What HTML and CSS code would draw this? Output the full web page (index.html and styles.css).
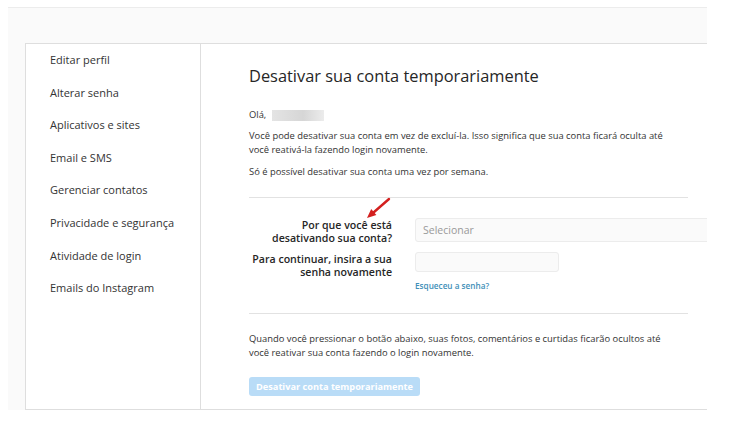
FILE: index.html
```html
<!DOCTYPE html>
<html lang="pt-BR">
<head>
  <meta charset="UTF-8">
  <meta name="viewport" content="width=device-width, initial-scale=1.0">
  <title>Desativar sua conta temporariamente</title>
  <link rel="stylesheet" href="styles.css">
</head>
<body>
  <div class="page">
    <div class="card">
      <ul class="sidebar">
        <li>Editar perfil</li>
        <li>Alterar senha</li>
        <li>Aplicativos e sites</li>
        <li>Email e SMS</li>
        <li>Gerenciar contatos</li>
        <li>Privacidade e segurança</li>
        <li>Atividade de login</li>
        <li>Emails do Instagram</li>
      </ul>

      <div class="main">
        <h1>Desativar sua conta temporariamente</h1>
        <p class="hello">Olá, <span class="blur"></span></p>
        <p>Você pode desativar sua conta em vez de excluí-la. Isso significa que sua conta ficará oculta até você reativá-la fazendo login novamente.</p>
        <p>Só é possível desativar sua conta uma vez por semana.</p>

        <hr>

        <form class="form">
          <div class="row">
            <label for="reason">Por que você está desativando sua conta?</label>
            <div class="field">
              <select id="reason" class="select">
                <option>Selecionar</option>
              </select>
            </div>
          </div>
          <div class="row">
            <label for="password">Para continuar, insira a sua senha novamente</label>
            <div class="field">
              <input type="password" id="password" class="input">
              <a href="#" class="forgot">Esqueceu a senha?</a>
            </div>
          </div>

          <!-- seta vermelha de destaque -->
          <svg class="arrow" width="26" height="24" viewBox="0 0 26 24">
            <line x1="24" y1="2" x2="8.5" y2="15.5" stroke="#d3201f" stroke-width="2.4" stroke-linecap="round"/>
            <polygon points="2,21 6.2,12.1 11.4,18.1" fill="#d3201f"/>
          </svg>
        </form>

        <hr class="bottom">

        <p class="note">Quando você pressionar o botão abaixo, suas fotos, comentários e curtidas ficarão ocultos até você reativar sua conta fazendo o login novamente.</p>

        <button type="button" class="btn" disabled>Desativar conta temporariamente</button>
      </div>
    </div>
  </div>
</body>
</html>
```

FILE: styles.css
```css
body {
  margin: 0;
  background: #fff;
  font-family: "Open Sans", "Noto Sans", Arial, sans-serif;
  color: #262626;
}

.page {
  margin: 7px 0 0 8px;
  width: 699px;
  height: 403px;
  background: #fafafa;
  border-top: 1px solid #ececec;
  box-sizing: border-box;
  padding: 35px 0 0 17px;
}

.card {
  display: flex;
  height: 100%;
  background: #fff;
  border: 1px solid #dedede;
  border-right: none;
  box-sizing: border-box;
}

/* menu da esquerda */
.sidebar {
  list-style: none;
  margin: 0;
  padding: 8px 0 0 0;
  width: 174px;
  border-right: 1px solid #dedede;
  flex-shrink: 0;
}

.sidebar li {
  font-size: 11px;
  line-height: 16px;
  padding: 0 0 16.6px 24px;
  color: #333;
}

.main {
  flex: 1;
  padding: 20px 0 0 48px;
  overflow: hidden;
}

h1 {
  margin: 0 0 20px;
  font-size: 16.4px;
  font-weight: 400;
  color: #262626;
  line-height: 24px;
}

.main p {
  margin: 0 0 8px;
  font-size: 9.4px;
  line-height: 14px;
  width: 433px;
  color: #333;
}

.main p.hello {
  display: flex;
  align-items: center;
  gap: 6px;
  margin-bottom: 7px;
}

.blur {
  display: inline-block;
  width: 52px;
  height: 11px;
  background: linear-gradient(90deg, #e4e4e4, #d6d6d6 60%, #ececec);
}

hr {
  width: 439px;
  margin: 18px 0 0;
  border: none;
  border-top: 1px solid #e2e2e2;
}

.form {
  position: relative;
  padding: 20px 0 22px;
}

.row {
  display: flex;
  gap: 23px;
  margin-bottom: 7px;
}

.row:last-of-type {
  margin-bottom: 0;
}

.row label {
  flex-shrink: 0;
  width: 143px;
  text-align: right;
  font-size: 10.6px;
  font-weight: 600;
  line-height: 13px;
  color: #262626;
  padding-top: 1px;
}

.field {
  flex-shrink: 0;
  display: flex;
  flex-direction: column;
  align-items: flex-start;
}

.select {
  width: 320px;
  height: 24px;
  border: 1px solid #ececec;
  background: #fafafa;
  color: #999;
  font-family: inherit;
  font-size: 10.5px;
  padding: 0 7px;
  appearance: none;
  border-radius: 3px;
}

.input {
  width: 144px;
  height: 20px;
  border: 1px solid #ececec;
  background: #fafafa;
  border-radius: 3px;
  box-sizing: border-box;
}

.forgot {
  margin-top: 9px;
  font-size: 8.2px;
  line-height: 10px;
  font-weight: 600;
  color: #3f8fb8;
  text-decoration: none;
}

.arrow {
  position: absolute;
  left: 116px;
  top: -1px;
}

hr.bottom {
  margin-top: 0;
}

.main p.note {
  margin: 18px 0 0;
}

.btn {
  display: block;
  margin-top: 17px;
  width: 171px;
  height: 19px;
  border: none;
  border-radius: 3px;
  background: #b9dcf7;
  color: #fff;
  font-family: inherit;
  font-size: 9.2px;
  font-weight: 700;
  padding: 0;
}
```
